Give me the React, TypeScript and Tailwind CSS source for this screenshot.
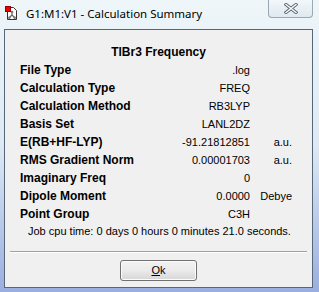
const rows: [string, string, string][] = [
  ['File Type', '.log', ''],
  ['Calculation Type', 'FREQ', ''],
  ['Calculation Method', 'RB3LYP', ''],
  ['Basis Set', 'LANL2DZ', ''],
  ['E(RB+HF-LYP)', '-91.21812851', 'a.u.'],
  ['RMS Gradient Norm', '0.00001703', 'a.u.'],
  ['Imaginary Freq', '0', ''],
  ['Dipole Moment', '0.0000', 'Debye'],
  ['Point Group', 'C3H', ''],
]

const AppIcon = () => (
  <svg width="14" height="15" viewBox="0 0 14 15">
    <path d="M2.5 1.5h6l3 3v9h-9z" fill="#fff" stroke="#333" />
    <rect x="0.5" y="0.5" width="5" height="5" fill="#e00" stroke="#900" />
    <path d="M7 6v3M7 9l-2.5 2.5M7 9l2.5 2.5" stroke="#666" strokeWidth="1.2" />
    <circle cx="7" cy="6" r="1.3" fill="#777" />
    <circle cx="4.3" cy="11.7" r="1.3" fill="#777" />
    <circle cx="9.7" cy="11.7" r="1.3" fill="#777" />
  </svg>
)

export default function App() {
  return (
    <div className="relative w-[319px] h-[292px] overflow-hidden bg-gradient-to-b from-[#eef6f9] via-[#dde9f3] to-[#9aaee0]">
      <div className="h-[29px] flex items-center pl-[5px] pb-[2px]">
        <AppIcon />
        <span className="ml-[7px] text-[11.5px] text-black font-['Noto_Sans',sans-serif]">
          G1:M1:V1 - Calculation Summary
        </span>
      </div>

      <div className="absolute top-0 left-[268px] w-[45px] h-[18px] rounded-b-[4px] border border-t-0 border-[#9aa7b4] bg-gradient-to-b from-[#f2f7fa] to-[#dfe9f0] flex items-center justify-center">
        <svg width="14" height="11" viewBox="0 0 14 11">
          <path d="M2 1.5l10 8M12 1.5l-10 8" stroke="#5a6470" strokeWidth="3.2" strokeLinecap="square" />
          <path d="M2 1.5l10 8M12 1.5l-10 8" stroke="#fff" strokeWidth="1.4" strokeLinecap="square" />
        </svg>
      </div>

      <div className="ml-[4px] w-[309px] h-[259px] border border-[#56677a] bg-[#f0f0f0] font-['Liberation_Sans',Arial,sans-serif] text-black">
        <div className="pt-[15px] text-center text-[12px] font-bold leading-[14px]">TlBr3 Frequency</div>
        <div className="mt-[2px] pl-[15px] w-[287px]">
          {rows.map(([label, value, unit]) => (
            <div key={label} className="flex items-center h-[18px]">
              <span className="flex-1 text-[12px] font-bold">{label}</span>
              <span className="w-[100px] text-right text-[11px]">{value}</span>
              <span className="w-[42px] text-right text-[11px]">{unit}</span>
            </div>
          ))}
        </div>
        <div className="pl-[23px] text-[11px] h-[16px] flex items-center">
          Job cpu time: 0 days 0 hours 0 minutes 21.0 seconds.
        </div>
        <div className="mt-[12px] mx-[5px] border-t border-[#a0a0a0] border-b border-b-white" />
        <div className="mt-[7px] flex justify-center">
          <button className="w-[77px] h-[21px] rounded-[3px] border border-[#707070] bg-gradient-to-b from-[#f2f2f2] via-[#ebebeb] to-[#d6d6d6] text-[11px] shadow-[inset_0_0_0_1px_#fcfcfc]">
            <span className="underline">O</span>k
          </button>
        </div>
      </div>
    </div>
  )
}
